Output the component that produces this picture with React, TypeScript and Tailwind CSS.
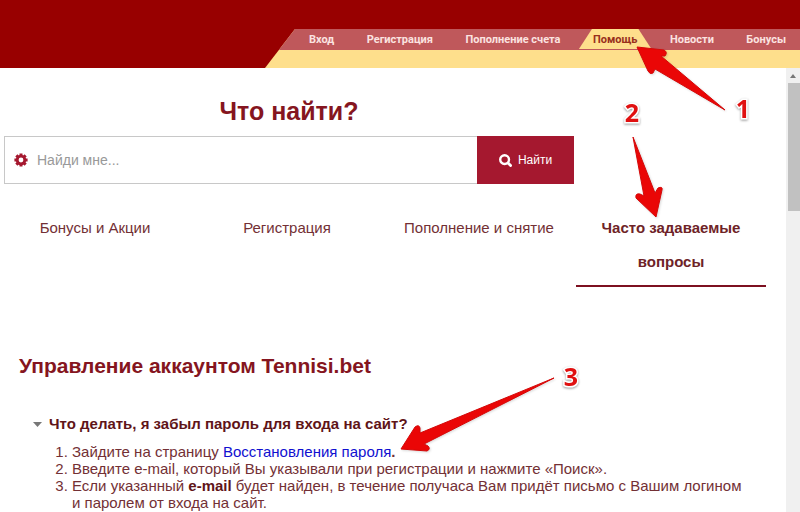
import React, { useState } from 'react';

const NAV_ITEMS = ['Вход', 'Регистрация', 'Пополнение счета', 'Помощь', 'Новости', 'Бонусы'];

const TOPICS = ['Бонусы и Акции', 'Регистрация', 'Пополнение и снятие', 'Часто задаваемые вопросы'];

const ARROWS = [
  'M637 47 L664 50 Q668 52 665 56 L661 56 L725 110 L655 69 L653 73 Q650 75 648 71 Z',
  'M656 217 L636 198 Q635 193 640 194 L644 196 L633 137 L655 193 L658 188 Q663 186 662 190 Z',
  'M401 449 L415 427 Q419 424 420 428 L420 433 L554 378 L424 444 L428 446 Q431 449 427 451 Z'
];

const MARKS = [
  { label: '1', x: 743, y: 118 },
  { label: '2', x: 632, y: 122 },
  { label: '3', x: 571, y: 386 }
];

const TEETH = [0, 45, 90, 135];

function CogIcon() {
  return (
    <svg viewBox="0 0 14 14" className="h-[14px] w-[14px] text-[#a5182f]">
      {TEETH.map((angle) => (
        <path key={angle} d="M5.500 0.400h3v2.800h-3zM5.500 10.800h3v2.800h-3z" fill="currentColor" transform={`rotate(${angle} 7 7)`} />
      ))}
      <circle cx="7" cy="7" r="3.800" fill="none" stroke="currentColor" strokeWidth="2.800" />
    </svg>
  );
}

function SearchIcon() {
  return (
    <svg viewBox="0 0 13 13" className="h-[13px] w-[13px]" fill="none" stroke="currentColor" strokeLinecap="round">
      <circle cx="5.600" cy="5.600" r="4.400" strokeWidth="2.400" />
      <path d="M9 9l2.600 2.600" strokeWidth="2.800" />
    </svg>
  );
}

function Header() {
  return (
    <header className="flex bg-[#980000] pt-[29px]">
      <div className="ml-[265px] flex-1 bg-[#fedf8c] [clip-path:polygon(30px_0,100%_0,100%_100%,0_100%)]">
        <nav className="flex h-[21px] items-stretch justify-between overflow-hidden bg-[#bf585b] pl-[44px] pr-[14px] font-['Roboto',sans-serif] text-[11px] font-bold leading-[21px] whitespace-nowrap text-[#fbe3e0]">
          {NAV_ITEMS.map((item) =>
            item === 'Помощь' ? (
              <a
                key={item}
                href="#help"
                className="-mx-[14px] bg-[#fedf8c] px-[14px] text-[#98301c] [clip-path:polygon(13px_0,calc(100%_-_13px)_0,100%_20px,0_20px)]"
              >
                {item}
              </a>
            ) : (
              <a key={item} href="#menu">{item}</a>
            )
          )}
        </nav>
        <div className="h-[18px]" />
      </div>
    </header>
  );
}

function SearchForm() {
  const [query, setQuery] = useState('');

  return (
    <form onSubmit={(e) => e.preventDefault()} className="ml-1 max-w-[570px]">
      <h1 className="text-center text-[25px] leading-8 font-bold text-[#851520]">Что найти?</h1>
      <div className="mt-[9px] flex h-12">
        <div className="flex flex-1 items-center border border-r-0 border-[#c8c8c8] pl-[9px]">
          <CogIcon />
          <input
            type="text"
            aria-label="Найди мне..."
            placeholder="Найди мне..."
            value={query}
            onChange={(e) => setQuery(e.target.value)}
            className="ml-[9px] w-full flex-1 text-[14px] text-[#6e2a2a] outline-none placeholder:text-[#999]"
          />
        </div>
        <button type="submit" className="flex w-[97px] items-center justify-center gap-[6px] bg-[#a5182f] text-[12px] text-white">
          <SearchIcon />
          Найти
        </button>
      </div>
    </form>
  );
}

function Topics() {
  const [active, setActive] = useState(3);

  return (
    <div className="mt-[27px] mr-5 grid grid-cols-4 items-start gap-[2px]">
      {TOPICS.map((topic, i) => (
        <button
          key={topic}
          type="button"
          onClick={() => setActive(i)}
          className={
            i === active
              ? 'border-b-2 border-[#7d1020] px-4 pb-[6px] text-[15px] leading-[34px] font-bold text-[#6e2327]'
              : 'border-b-2 border-transparent pb-[6px] text-[15px] leading-[34px] text-[#733035]'
          }
        >
          {topic}
        </button>
      ))}
    </div>
  );
}

function Faq() {
  return (
    <section className="mt-[65px] pr-10 pl-[19px]">
      <h2 className="text-[21px] leading-7 font-bold text-[#851520]">Управление аккаунтом Tennisi.bet</h2>
      <details open className="mt-[34px] pl-[14px]">
        <summary className="flex list-none items-center gap-[7px] text-[15px] leading-5 font-bold text-[#5f1418]">
          <svg viewBox="0 0 9 5" className="h-[5px] w-[9px]">
            <path d="M0 0h9L4.500 5z" fill="#777" />
          </svg>
          Что делать, я забыл пароль для входа на сайт?
        </summary>
        <ol className="mt-[9px] list-decimal pl-[39px] text-[15px] leading-[17px] text-[#733035]">
          <li>
            Зайдите на страницу <a href="#restore" className="text-[#1010d0]">Восстановления пароля</a><b>.</b>
          </li>
          <li>Введите e-mail, который Вы указывали при регистрации и нажмите «Поиск».</li>
          <li>
            Если указанный <b className="text-[#5f1418]">e-mail</b> будет найден, в течение получаса Вам придёт письмо с Вашим логином и паролем от входа на сайт.
          </li>
        </ol>
      </details>
    </section>
  );
}

function Scrollbar() {
  return (
    <div className="flex w-[14px] flex-col bg-[#f0f0f0]">
      <div className="flex h-[15px] items-center justify-center">
        <svg viewBox="0 0 6 4" className="h-1 w-[6px]">
          <path d="M0 4L3 0l3 4z" fill="#777" />
        </svg>
      </div>
      <div className="ml-[2px] h-32 bg-[#c1c1c1]" />
    </div>
  );
}

// Numbered arrows that lie over the page
function Annotations() {
  return (
    <svg
      width="800"
      height="512"
      viewBox="0 0 800 512"
      className="pointer-events-none absolute top-0 left-0 font-['Open_Sans',sans-serif] text-[25px] font-bold"
    >
      <g className="drop-shadow-[1px_1px_1px_rgba(0,0,0,0.15)]">
        {ARROWS.map((d) => (
          <path key={d} d={d} fill="#ea0606" stroke="#d40808" strokeWidth="1" strokeLinejoin="round" />
        ))}
      </g>
      <g className="drop-shadow-[0px_1px_1px_rgba(0,0,0,0.4)]">
        {MARKS.map((m) => (
          <text key={m.label} x={m.x} y={m.y} textAnchor="middle" fill="#e01010" stroke="#fff" strokeWidth="3" paintOrder="stroke">
            {m.label}
          </text>
        ))}
      </g>
    </svg>
  );
}

export default function App() {
  return (
    <div className="relative flex h-screen flex-col overflow-hidden bg-white font-['Liberation_Sans',Arial,sans-serif]">
      <Header />
      <div className="flex min-h-0 flex-1">
        <main className="min-w-0 flex-1 overflow-hidden pt-[27px]">
          <SearchForm />
          <Topics />
          <Faq />
        </main>
        <Scrollbar />
      </div>
      <Annotations />
    </div>
  );
}
